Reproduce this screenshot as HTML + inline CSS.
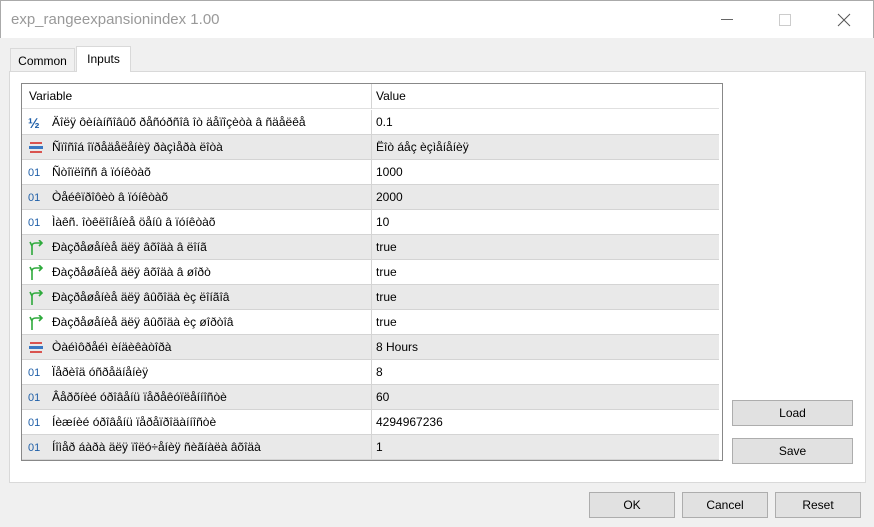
<!DOCTYPE html>
<html><head><meta charset="utf-8"><style>
*{margin:0;padding:0;box-sizing:border-box}
body{width:874px;height:527px;background:#f0f0f0;font-family:"Liberation Sans","DejaVu Sans",sans-serif;font-size:12px;color:#000;position:relative;overflow:hidden}
.abs{position:absolute}
.title{left:0;top:0;width:874px;height:38px;background:#fff;border:1px solid #aaa;border-bottom:none}
.title span{position:absolute;left:10px;top:10px;font-size:15px;color:#999}
.panel{left:9px;top:71px;width:857px;height:412px;background:#fff;border:1px solid #d9d9d9}
.tab{top:47px;height:25px;border:1px solid #d9d9d9;border-bottom:none;text-align:center;line-height:24px}
.tbl{left:21px;top:83px;width:702px;height:378px;border:1px solid #888;background:#fff;overflow:hidden}
.row{position:absolute;left:0;width:697px;height:25px;border-bottom:1px solid #d4d4d4;line-height:24px}
.row.g{background:#e9e9e9}
.row .n{position:absolute;left:30px}
.row .v{position:absolute;left:354px}
.row .sep{position:absolute;left:349px;top:0;width:1px;height:25px;background:#d4d4d4}
.ic{position:absolute;left:6px;top:5px;width:16px;height:16px;font-size:11px;line-height:16px}
.btn{background:#e1e1e1;border:1px solid #adadad;text-align:center;line-height:24px;height:26px}
</style></head><body>
<div class="abs title"><span>exp_rangeexpansionindex 1.00</span>
<div class="abs" style="left:720px;top:18px;width:12px;height:1px;background:#666"></div>
<div class="abs" style="left:778px;top:13px;width:12px;height:12px;border:1px solid #ccc"></div>
<svg class="abs" style="left:836px;top:12px" width="14" height="14"><path d="M1 1L13 13M13 1L1 13" stroke="#555" stroke-width="1"/></svg>
</div>
<div class="abs tab" style="left:10px;width:65px;background:#f0f0f0;top:48px">Common</div>
<div class="abs panel"></div>
<div class="abs tab" style="left:76px;width:55px;background:#fff;top:46px;height:26px;z-index:2">Inputs</div>
<div class="abs tbl">
<div class="row" style="top:0;border-bottom:1px solid #e0e0e0"><span class="n" style="left:7px">Variable</span><span class="v">Value</span><div class="sep"></div></div>
<div id="rows"></div>
</div>
<div class="abs btn" style="left:732px;top:400px;width:121px">Load</div>
<div class="abs btn" style="left:732px;top:438px;width:121px">Save</div>
<div class="abs btn" style="left:589px;top:492px;width:86px">OK</div>
<div class="abs btn" style="left:682px;top:492px;width:86px">Cancel</div>
<div class="abs btn" style="left:775px;top:492px;width:86px">Reset</div>
<script>
var d=[["h","Äîëÿ ôèíàíñîâûõ ðåñóðñîâ îò äåïîçèòà â ñäåëêå","0.1"],
["e","Ñïîñîá îïðåäåëåíèÿ ðàçìåðà ëîòà","Ëîò áåç èçìåíåíèÿ"],
["o","Ñòîïëîññ â ïóíêòàõ","1000"],
["o","Òåéêïðîôèò â ïóíêòàõ","2000"],
["o","Ìàêñ. îòêëîíåíèå öåíû â ïóíêòàõ","10"],
["a","Ðàçðåøåíèå äëÿ âõîäà â ëîíã","true"],
["a","Ðàçðåøåíèå äëÿ âõîäà â øîðò","true"],
["a","Ðàçðåøåíèå äëÿ âûõîäà èç ëîíãîâ","true"],
["a","Ðàçðåøåíèå äëÿ âûõîäà èç øîðòîâ","true"],
["e","Òàéìôðåéì èíäèêàòîðà","8 Hours"],
["o","Ïåðèîä óñðåäíåíèÿ","8"],
["o","Âåðõíèé óðîâåíü ïåðåêóïëåííîñòè","60"],
["o","Íèæíèé óðîâåíü ïåðåïðîäàííîñòè","4294967236"],
["o","Íîìåð áàðà äëÿ ïîëó÷åíèÿ ñèãíàëà âõîäà","1"]];
var h="";
var ic={h:'<span class="ic" style="color:#1f5fa8;font-size:14px;font-weight:bold">½</span>',
e:'<svg class="ic" viewBox="0 0 16 16"><rect x="2" y="2" width="12" height="2" fill="#d9534f"/><rect x="1" y="6" width="14" height="3" fill="#3a78c2"/><rect x="2" y="11" width="12" height="2" fill="#d9534f"/></svg>',
o:'<span class="ic" style="color:#1f5fa8">01</span>',
a:'<svg class="ic" viewBox="0 0 16 16"><path d="M4 15V6Q4 3 8 3H14M11 0L14 3L11 6M4 6L2 2" stroke="#2eaa3c" stroke-width="1.6" fill="none"/></svg>'};
d.forEach(function(r,i){h+='<div class="row'+(i%2?' g':'')+'" style="top:'+(26+i*25)+'px">'+ic[r[0]]+'<span class="n">'+r[1]+'</span><div class="sep"></div><span class="v">'+r[2]+'</span></div>';});
document.getElementById("rows").innerHTML=h;
</script>
</body></html>
